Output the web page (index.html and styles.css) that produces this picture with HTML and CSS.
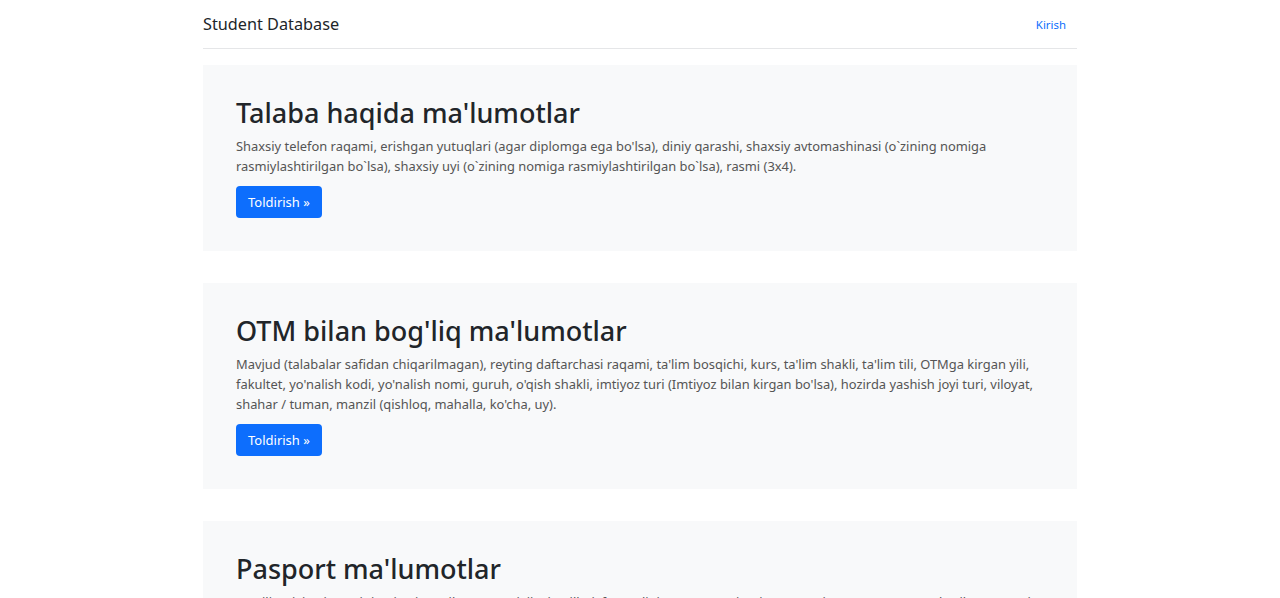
FILE: index.html
```html
<!DOCTYPE html>
<html lang="uz">
<head>
<meta charset="utf-8">
<title>Student Database</title>
<link rel="stylesheet" href="styles.css">
</head>
<body>
<div class="container">
  <header class="topbar">
    <a class="brand" href="#">Student Database</a>
    <a class="nav-link" href="#">Kirish</a>
  </header>
  <main class="sections">
    <section class="panel">
      <h2 class="panel-title">Talaba haqida ma'lumotlar</h2>
      <p class="panel-text">Shaxsiy telefon raqami, erishgan yutuqlari (agar diplomga ega bo'lsa), diniy qarashi, shaxsiy avtomashinasi (o`zining nomiga rasmiylashtirilgan bo`lsa), shaxsiy uyi (o`zining nomiga rasmiylashtirilgan bo`lsa), rasmi (3x4).</p>
      <div class="actions"><a class="btn" href="#">Toldirish »</a></div>
    </section>
    <section class="panel">
      <h2 class="panel-title">OTM bilan bog'liq ma'lumotlar</h2>
      <p class="panel-text">Mavjud (talabalar safidan chiqarilmagan), reyting daftarchasi raqami, ta'lim bosqichi, kurs, ta'lim shakli, ta'lim tili, OTMga kirgan yili, fakultet, yo'nalish kodi, yo'nalish nomi, guruh, o'qish shakli, imtiyoz turi (Imtiyoz bilan kirgan bo'lsa), hozirda yashish joyi turi, viloyat, shahar / tuman, manzil (qishloq, mahalla, ko'cha, uy).</p>
      <div class="actions"><a class="btn" href="#">Toldirish »</a></div>
    </section>
    <section class="panel">
      <h2 class="panel-title">Pasport ma'lumotlar</h2>
      <p class="panel-text">Familiyasi, ismi, otasining ismi, tug'ilgan sanasi, jinsi, millati, fuqaroligi, pasport seriyasi va raqami, JSHSHIR, pasport berilgan sanasi, kim tomonidan berilgan, doimiy yashash manzili.</p>
      <div class="actions"><a class="btn" href="#">Toldirish »</a></div>
    </section>
  </main>
</div>
</body>
</html>
```
FILE: styles.css
```css
* { box-sizing: border-box; }
html, body { margin: 0; padding: 0; }
body {
  font-family: "Noto Sans", "Liberation Sans", sans-serif;
  color: #212529;
  background: #fff;
}
.container {
  width: 874px;
  margin: 0 auto;
}
.topbar {
  height: 49px;
  display: flex;
  align-items: center;
  justify-content: space-between;
  border-bottom: 1px solid #e5e6e8;
  margin-bottom: 16px;
}
.brand {
  font-size: 16.25px;
  color: #212529;
  text-decoration: none;
  line-height: 24px;
}
.nav-link {
  font-size: 11.4px;
  color: #0d6efd;
  text-decoration: none;
  margin-right: 11px;
}
.sections {
  display: flex;
  flex-direction: column;
  gap: 32px;
}
.panel {
  background: #f8f9fa;
  padding: 32px 33px 32.5px;
}
.panel-title {
  font-size: 27px;
  font-weight: 500;
  line-height: 1.2;
  margin: 0 0 7px;
  color: #212529;
}
.panel-text {
  font-size: 12.9px;
  line-height: 20px;
  color: #555;
  margin: 0 0 10px;
}
.actions {
  display: flex;
}
.btn {
  display: block;
  background: #0d6efd;
  color: #fff;
  font-size: 13px;
  line-height: 20px;
  padding: 6px 12px;
  border-radius: 4px;
  text-decoration: none;
}
```
